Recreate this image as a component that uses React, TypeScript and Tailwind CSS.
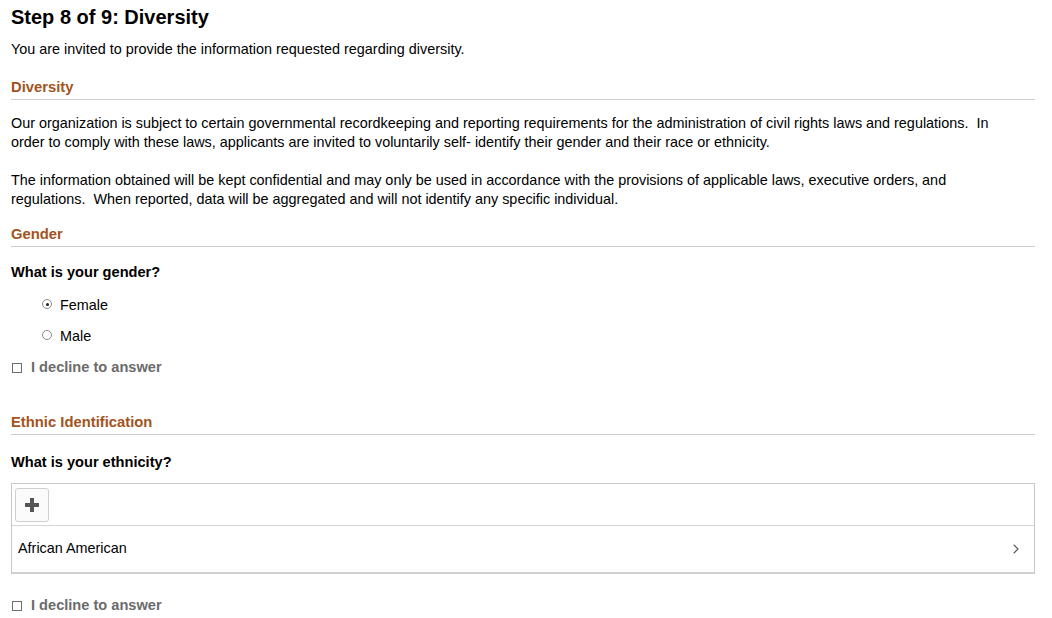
import { ChevronRight } from 'lucide-react'

function SectionHeading({ children }: { children: React.ReactNode }) {
  return (
    <div className="border-b border-[#cfcfcf] pb-[3px]">
      <h2 className="text-[14.8px] leading-[18px] font-bold text-[#a3531c]">{children}</h2>
    </div>
  )
}

function Radio({ checked, label }: { checked?: boolean; label: string }) {
  return (
    <label className="flex items-center h-[20px] pl-[31px]">
      <span className="relative w-[10px] h-[10px] rounded-full border border-[#8a8a8a] bg-white mr-[8px] -mt-[4px]">
        {checked && <span className="absolute left-[2.5px] top-[2.5px] w-[3px] h-[3px] rounded-full bg-[#222]" />}
      </span>
      <span className="text-[14.4px] text-black">{label}</span>
    </label>
  )
}

function Decline() {
  return (
    <label className="flex items-center h-[20px]">
      <span className="w-[10px] h-[10px] border border-[#6e6e6e] bg-white ml-[1px] mr-[9px] -mt-[1px]" />
      <span className="text-[14.6px] font-bold text-[#6b6b6b]">I decline to answer</span>
    </label>
  )
}

export default function App() {
  return (
    <div className="w-[1052px] h-[618px] bg-white overflow-hidden font-['Liberation_Sans',Arial,sans-serif] text-black">
      <div className="pl-[11px] pr-[17px]">
        <h1 className="text-[20px] leading-[24px] font-bold pt-[5px]">Step 8 of 9: Diversity</h1>
        <p className="text-[14.4px] leading-[19px] mt-[11px]">
          You are invited to provide the information requested regarding diversity.
        </p>

        <div className="mt-[19px]">
          <SectionHeading>Diversity</SectionHeading>
        </div>
        <p className="text-[14.4px] leading-[19px] mt-[14px] max-w-[1005px]">
          Our organization is subject to certain governmental recordkeeping and reporting requirements for the
          administration of civil rights laws and regulations.&nbsp; In order to comply with these laws, applicants are
          invited to voluntarily self- identify their gender and their race or ethnicity.
        </p>
        <p className="text-[14.4px] leading-[19px] mt-[19px] max-w-[1005px]">
          The information obtained will be kept confidential and may only be used in accordance with the provisions of
          applicable laws, executive orders, and regulations.&nbsp; When reported, data will be aggregated and will not
          identify any specific individual.
        </p>

        <div className="mt-[16px]">
          <SectionHeading>Gender</SectionHeading>
        </div>
        <p className="text-[14.6px] leading-[19px] font-bold mt-[16px]">What is your gender?</p>
        <div className="mt-[14px] flex flex-col gap-[11px]">
          <Radio checked label="Female" />
          <Radio label="Male" />
        </div>
        <div className="mt-[11px]">
          <Decline />
        </div>

        <div className="mt-[35px]">
          <SectionHeading>Ethnic Identification</SectionHeading>
        </div>
        <p className="text-[14.6px] leading-[19px] font-bold mt-[18px]">What is your ethnicity?</p>

        <div className="mt-[11px] border border-[#c8c8c8] border-b-2 border-b-[#d0d0d0]">
          <div className="px-[3px] pt-[4px] pb-[3px]">
            <button className="w-[34px] h-[34px] rounded-[3px] border border-[#cfcfcf] bg-[#fbfbfb] flex items-center justify-center">
              <svg width="16" height="16" viewBox="0 0 16 16">
                <rect x="6" y="1" width="4" height="14" fill="#555" />
                <rect x="1" y="6" width="14" height="4" fill="#555" />
              </svg>
            </button>
          </div>
          <div className="border-t border-[#d4d4d4] h-[47px] flex items-center justify-between pl-[6px] pr-[10px]">
            <span className="text-[14.4px]">African American</span>
            <ChevronRight size={16} strokeWidth={1.6} className="text-[#555]" />
          </div>
        </div>

        <div className="mt-[22px]">
          <Decline />
        </div>
      </div>
    </div>
  )
}
